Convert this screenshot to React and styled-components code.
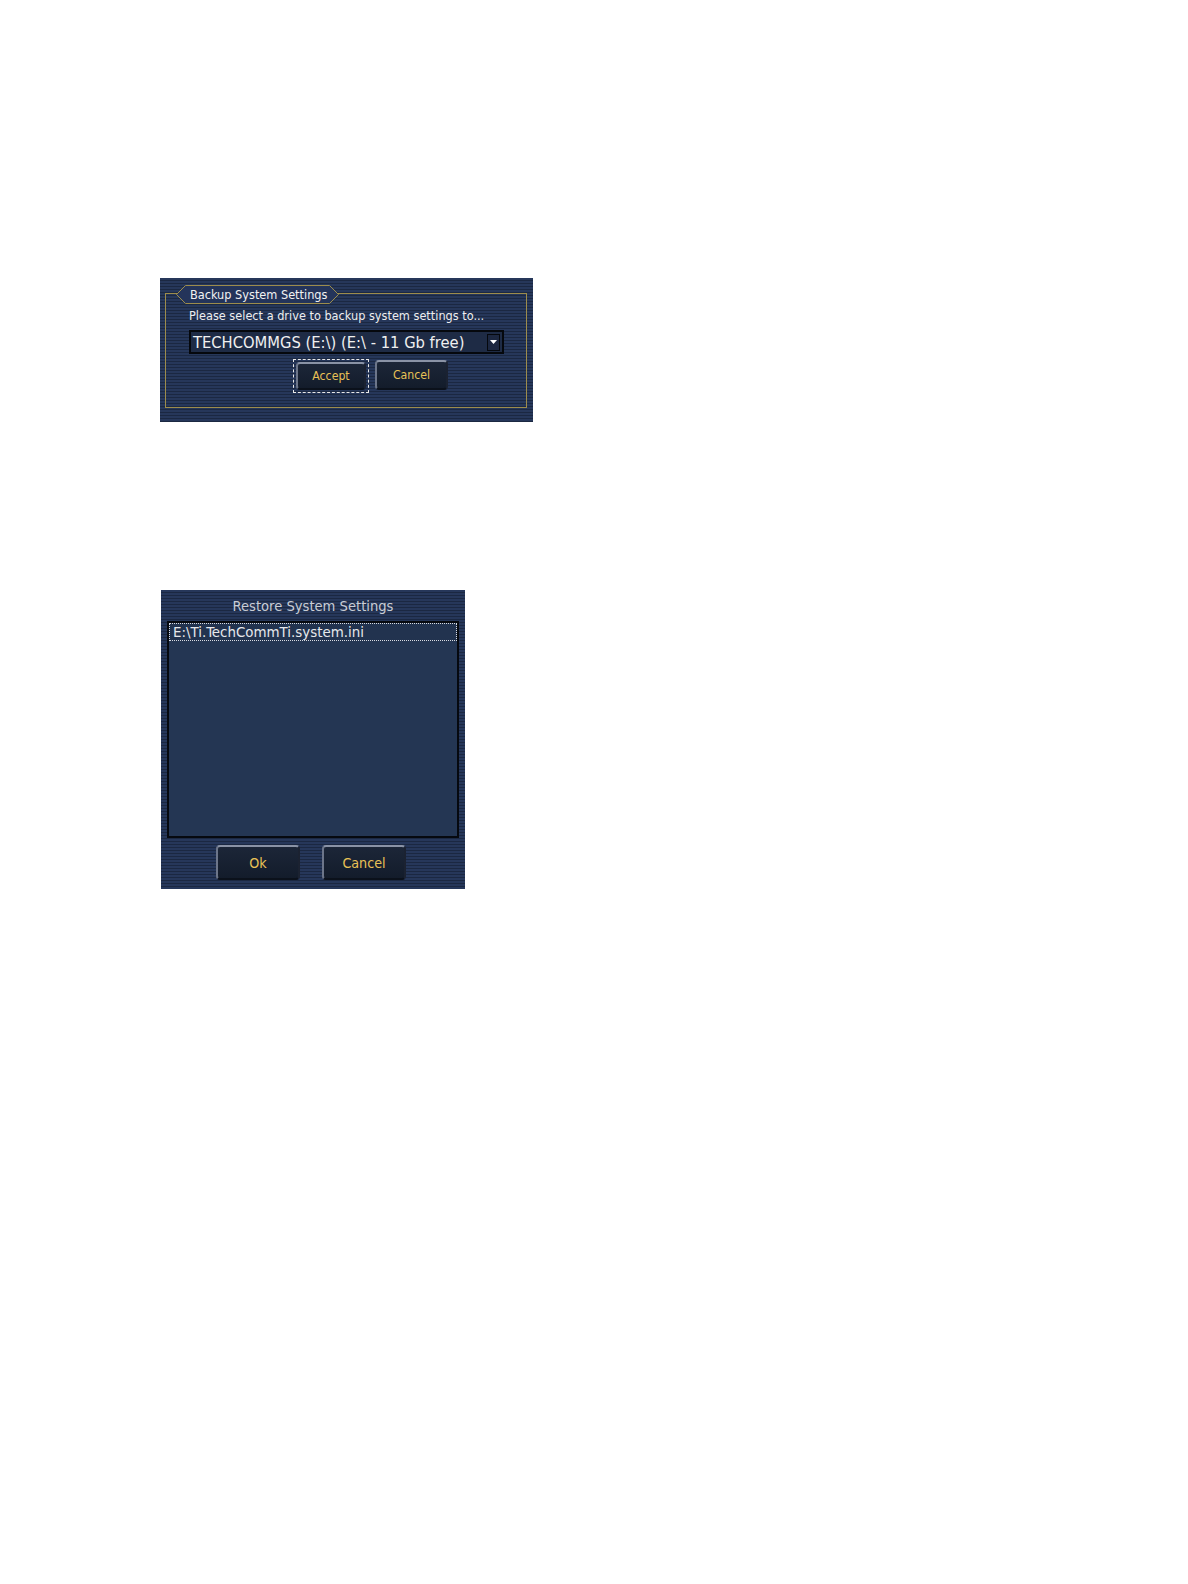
import React from "react";
import styled, { createGlobalStyle } from "styled-components";

const Global = createGlobalStyle`
  html, body { margin: 0; padding: 0; background: #ffffff; }
  body { font-family: "DejaVu Sans Condensed", "DejaVu Sans", sans-serif; font-stretch: condensed; }
`;

const FONT = `"DejaVu Sans Condensed", "DejaVu Sans", sans-serif`;

const Page = styled.div`
  display: flex;
  flex-direction: column;
  align-items: flex-start;
  padding: 278px 0 0 160px;
  gap: 168px;
  min-height: 1584px;
  box-sizing: border-box;
`;

const scan = `
  background-color: #23324f;
  background-image: repeating-linear-gradient(
    to bottom,
    #26375a 0px,
    #26375a 2px,
    #1b2842 2px,
    #1b2842 3px
  );
`;

const Panel = styled.section`
  ${scan}
  box-sizing: border-box;
  width: ${(p) => p.$w}px;
  height: ${(p) => p.$h}px;
  margin-left: ${(p) => p.$ml || 0}px;
  display: flex;
  flex-direction: column;
  font-family: ${FONT};
  font-stretch: condensed;
`;

const BackupPanel = styled(Panel)`
  padding: 15px 6px 0 5px;
`;

const Frame = styled.div`
  position: relative;
  box-sizing: border-box;
  height: 115px;
  border: 1px solid #9c8c4c;
  padding: 14px 0 0 23px;
  display: flex;
  flex-direction: column;
`;

const Tab = styled.div`
  position: absolute;
  top: -9px;
  left: 10px;
  width: 163px;
  height: 19px;
  display: flex;
  align-items: center;
  padding-left: 14px;
  box-sizing: border-box;
  color: #f2f2f2;
  font-size: 12.6px;
  white-space: nowrap;
  svg { position: absolute; inset: 0; z-index: 0; }
  span { position: relative; z-index: 1; }
`;

const Prompt = styled.div`
  color: #eeeeee;
  font-size: 12.6px;
  line-height: 15px;
  white-space: nowrap;
`;

const Select = styled.div`
  margin-top: 7px;
  width: 315px;
  height: 24px;
  box-sizing: border-box;
  border: 2px solid #05080d;
  background: #1e2b45;
  display: flex;
  align-items: center;
  padding: 0 2px 0 2px;
  color: #f0f0f0;
  font-size: 16.4px;
  white-space: nowrap;
`;

const SelectText = styled.span`
  flex: 1;
`;

const DropBtn = styled.div`
  width: 13px;
  height: 17px;
  box-sizing: border-box;
  border: 1px solid #05080d;
  background: #1c2740;
  display: flex;
  align-items: center;
  justify-content: center;
`;

const ButtonRow = styled.div`
  display: flex;
  align-items: flex-start;
  gap: ${(p) => p.$gap}px;
  margin: ${(p) => p.$m};
`;

const Focus = styled.div`
  border: 1px dashed #e8e8e8;
  padding: 2px;
`;

const Btn = styled.button`
  width: ${(p) => p.$w}px;
  height: ${(p) => p.$h}px;
  box-sizing: border-box;
  border-radius: 4px;
  border: 2px solid #4a5468;
  border-top-color: #8a93a6;
  border-left-color: #6d768a;
  border-bottom-color: #0b111b;
  border-right-color: #1b2231;
  background: linear-gradient(to bottom, #1c2638 0%, #131c2b 100%);
  color: #e9c156;
  font-family: ${FONT};
  font-stretch: condensed;
  font-size: ${(p) => p.$fs}px;
  font-weight: ${(p) => p.$fw || 400};
  padding: 0;
  display: flex;
  align-items: center;
  justify-content: center;
`;

const RestorePanel = styled(Panel)`
  padding: 0 6px 0 6px;
  align-items: stretch;
`;

const Title = styled.div`
  text-align: center;
  color: #c9cdd5;
  font-size: 14.6px;
  height: 31px;
  line-height: 31px;
`;

const ListBox = styled.div`
  box-sizing: border-box;
  height: 217px;
  border: 2px solid #06090f;
  background: #243653;
  padding: 0;
`;

const ListItem = styled.div`
  box-sizing: border-box;
  height: 18px;
  border: 1px dotted #d8dbe2;
  background: #22334f;
  color: #e6e8ec;
  font-size: 14.9px;
  line-height: 16px;
  padding-left: 3px;
  white-space: nowrap;
`;

export default function App() {
  return (
    <>
      <Global />
      <Page>
        <BackupPanel $w={373} $h={144}>
          <Frame>
            <Tab>
              <svg width="163" height="19" viewBox="0 0 163 19">
                <polygon
                  points="9.5,0.5 153.5,0.5 162.5,9.5 153.5,18.5 9.5,18.5 0.5,9.5"
                  fill="#24345a"
                  stroke="#9c8c4c"
                  strokeWidth="1"
                />
              </svg>
              <span>Backup System Settings</span>
            </Tab>
            <Prompt>Please select a drive to backup system settings to...</Prompt>
            <Select>
              <SelectText>TECHCOMMGS (E:\) (E:\ - 11 Gb free)</SelectText>
              <DropBtn>
                <svg width="7" height="4" viewBox="0 0 7 4">
                  <polygon points="0,0 7,0 3.5,4" fill="#ffffff" />
                </svg>
              </DropBtn>
            </Select>
            <ButtonRow $gap={6} $m="5px 0 0 104px">
              <Focus>
                <Btn $w={70} $h={28} $fs={12.2}>Accept</Btn>
              </Focus>
              <ButtonRow $gap={0} $m="1px 0 0 0">
                <Btn $w={73} $h={30} $fs={12.2}>Cancel</Btn>
              </ButtonRow>
            </ButtonRow>
          </Frame>
        </BackupPanel>

        <RestorePanel $w={304} $h={299} $ml={1}>
          <Title>Restore System Settings</Title>
          <ListBox>
            <ListItem>E:\Ti.TechCommTi.system.ini</ListItem>
          </ListBox>
          <ButtonRow $gap={22} $m="7px 0 0 49px">
            <Btn $w={84} $h={35} $fs={14.2}>Ok</Btn>
            <Btn $w={84} $h={35} $fs={14.2}>Cancel</Btn>
          </ButtonRow>
        </RestorePanel>
      </Page>
    </>
  );
}
